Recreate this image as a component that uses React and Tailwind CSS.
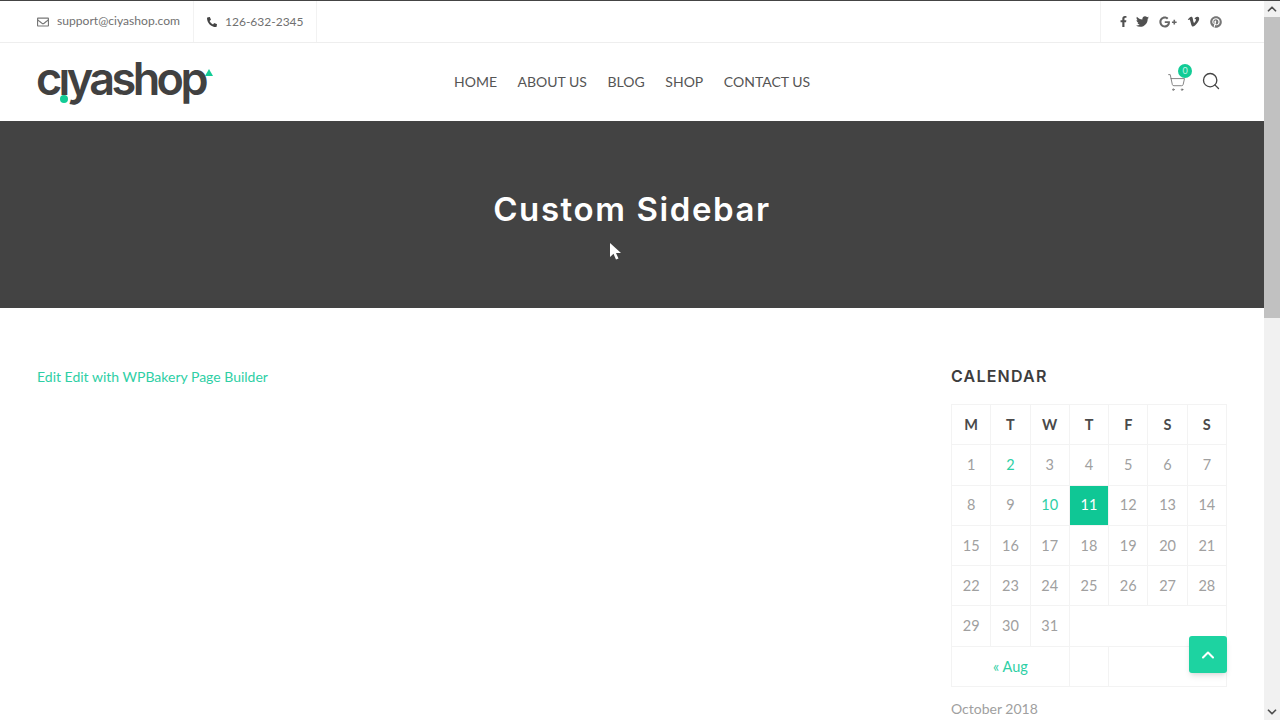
import { ShoppingCart, Search, ChevronUp, ChevronDown } from 'lucide-react';
import { FaFacebookF, FaTwitter, FaGooglePlusG, FaVimeoV, FaPinterest, FaRegEnvelope, FaPhoneAlt } from 'react-icons/fa';

const navLinks = ['HOME', 'ABOUT US', 'BLOG', 'SHOP', 'CONTACT US'];
const weekDays = ['M', 'T', 'W', 'T', 'F', 'S', 'S'];
const weeks = [
  [1, 2, 3, 4, 5, 6, 7],
  [8, 9, 10, 11, 12, 13, 14],
  [15, 16, 17, 18, 19, 20, 21],
  [22, 23, 24, 25, 26, 27, 28],
];

const Logo = () => (
  <div className="relative -mt-[6px] -ml-px h-[50px] w-[176px] font-['Inter',sans-serif] text-[45px] leading-[50px] font-semibold tracking-[-3.6px] text-[#414141]">
    c&#305;yashop
    <span className="absolute left-[24px] top-[41px] h-[8px] w-[8px] rounded-full bg-[#12cc96]" />
    <span className="absolute left-[169px] top-[15px] h-0 w-0 border-x-[4px] border-b-[7px] border-x-transparent border-b-[#12cc96]" />
  </div>
);

const Calendar = () => (
  <table className="w-[276px] table-fixed border-collapse text-center text-[14.5px] text-[#a0a0a0]">
    <thead>
      <tr className="h-[40.3px]">
        {weekDays.map((d, i) => (
          <th key={i} className="border border-[#f3f3f3] font-bold text-[#4a4a4a]">{d}</th>
        ))}
      </tr>
    </thead>
    <tbody>
      {weeks.map((week) => (
        <tr key={week[0]} className="h-[40.3px]">
          {week.map((n) => {
            if (n === 11) {
              return <td key={n} className="border border-[#f3f3f3] bg-[#0fc795] text-white">{n}</td>;
            }
            return (
              <td key={n} className={`border border-[#f3f3f3] ${n === 2 || n === 10 ? 'text-[#2ecfa5]' : ''}`}>{n}</td>
            );
          })}
        </tr>
      ))}
      <tr className="h-[40.3px]">
        <td className="border border-[#f3f3f3]">29</td>
        <td className="border border-[#f3f3f3]">30</td>
        <td className="border border-[#f3f3f3]">31</td>
        <td colSpan={4} className="border border-[#f3f3f3]"></td>
      </tr>
      <tr className="h-[40.3px]">
        <td colSpan={3} className="border border-[#f3f3f3] text-[#2ecfa5]">« Aug</td>
        <td className="border border-[#f3f3f3]"></td>
        <td colSpan={3} className="border border-[#f3f3f3]"></td>
      </tr>
    </tbody>
  </table>
);

const App = () => {
  return (
    <div className="relative flex h-[720px] w-[1280px] flex-col overflow-hidden bg-white font-['Lato',sans-serif] text-[#666666]">
      <div className="h-px shrink-0 bg-[#444444]" />
      <div className="flex min-h-0 flex-1">
        <div className="w-[1264px] shrink-0">
          <div className="flex h-[42px] items-stretch justify-between border-b border-b-[#eeeeee] pl-[37px] pr-[36px]">
            <div className="flex items-stretch">
              <div className="flex items-center gap-2 border-r border-[#f2f2f2] pr-[13px]">
                <FaRegEnvelope className="text-[12px] text-[#777777]" />
                <span className="text-[12.1px] text-[#707070]">support@ciyashop.com</span>
              </div>
              <div className="flex items-center gap-2 border-r border-[#f2f2f2] pl-[13px] pr-[12px]">
                <FaPhoneAlt className="text-[10px] text-[#444444]" />
                <span className="text-[12px] text-[#707070]">126-632-2345</span>
              </div>
            </div>
            <div className="flex items-center gap-[10px] border-l border-[#f2f2f2] pl-[17px] pr-[6px] text-[#505050]">
              <FaFacebookF className="-mr-[3px] text-[11px]" />
              <FaTwitter className="text-[13px]" />
              <FaGooglePlusG className="text-[18px] text-[#666666]" />
              <FaVimeoV className="text-[13px]" />
              <FaPinterest className="text-[12px] text-[#777777]" />
            </div>
          </div>

          <div className="flex h-[78px] items-center pl-[37px] pr-[43px]">
            <Logo />
            <nav className="mb-[2px] ml-[242px] flex items-center gap-[20.6px] text-[14px] text-[#555555]">
              {navLinks.map((link) => (
                <a key={link} href="#">{link}</a>
              ))}
            </nav>
            <div className="relative ml-auto flex items-center gap-[15px]">
              <ShoppingCart className="h-[19px] w-[19px] text-[#666666]" strokeWidth={1} />
              <Search className="-mt-[2px] h-[20px] w-[20px] text-[#444444]" strokeWidth={1.6} />
              <span className="absolute -top-[9px] left-[11px] flex h-[14px] w-[14px] items-center justify-center rounded-full bg-[#12cc96] text-[9px] text-[#c8f5e6]">0</span>
            </div>
          </div>

          <div className="flex h-[187px] justify-center bg-[#434343] pt-[63px]">
            <h1 className="font-['Inter',sans-serif] text-[33px] leading-[50px] font-semibold tracking-[1.6px] text-white">Custom Sidebar</h1>
          </div>

          <div className="flex justify-between pl-[37px] pr-[37px] pt-[57px]">
            <a href="#" className="text-[14px] leading-[24px] text-[#2ecfa5]">Edit Edit with WPBakery Page Builder</a>
            <div className="w-[276px]">
              <h3 className="-mt-px mb-[16px] font-['Inter',sans-serif] text-[16px] leading-[24px] font-semibold tracking-[1.2px] text-[#3d3d3d]">CALENDAR</h3>
              <Calendar />
              <p className="mt-[11px] text-[14px] leading-[21px] text-[#a0a0a0]">October 2018</p>
            </div>
          </div>
        </div>

        <div className="flex w-4 shrink-0 flex-col items-center bg-[#f1f1f1]">
          <ChevronUp className="h-[16px] w-[14px] shrink-0 text-[#505050]" strokeWidth={3} />
          <div className="h-[301px] w-full bg-[#c1c1c1]" />
          <div className="flex-1" />
          <ChevronDown className="h-[16px] w-[14px] shrink-0 text-[#505050]" strokeWidth={3} />
        </div>
      </div>

      <button className="absolute left-[1189px] top-[636px] flex h-[37px] w-[38px] items-center justify-center rounded-[3px] bg-[#1dd3a1] text-white shadow-md">
        <ChevronUp className="h-[20px] w-[20px]" strokeWidth={2.5} />
      </button>

      <svg className="absolute left-[609px] top-[242px]" width="13" height="19" viewBox="0 0 13 19">
        <path d="M1 1 L1 15 L4.5 11.8 L7 17.5 L9.5 16.5 L7 11 L12 11 Z" fill="#fff" />
      </svg>
    </div>
  );
};

export default App;
